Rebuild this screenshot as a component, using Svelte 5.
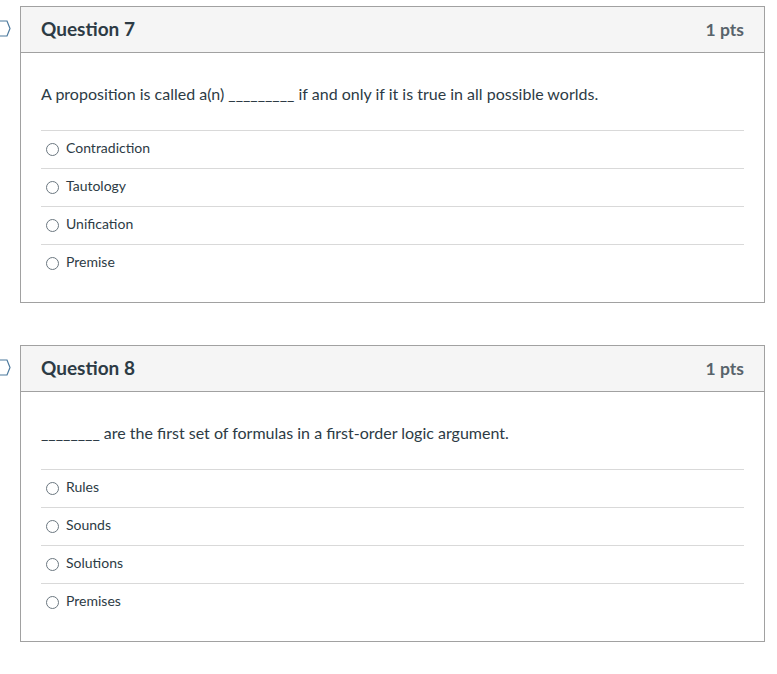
<script>
  const questions = [
    { title: 'Question 7', parts: 'A proposition is called a(n) _________ if and only if it is true in all possible worlds.', answers: ['Contradiction', 'Tautology', 'Unification', 'Premise'] },
    { title: 'Question 8', parts: '________ are the first set of formulas in a first-order logic argument.', answers: ['Rules', 'Sounds', 'Solutions', 'Premises'] }
  ];
</script>

<div class="page">
  {#each questions as q}
    <section class="card">
      <svg class="flag" width="11" height="18" viewBox="0 0 11 18" aria-hidden="true"><path d="M-3 1H7L10 8.5 7 16H-3" fill="#fff" stroke="#4d7a9e" stroke-width="1.2"/></svg>
      <header class="head">
        <h2>{q.title}</h2>
        <span class="pts">1 pts</span>
      </header>
      <div class="body">
        <p class="text">{q.parts}</p>
        <ul class="answers">
          {#each q.answers as a}
            <li><span class="radio"></span><span>{a}</span></li>
          {/each}
        </ul>
      </div>
    </section>
  {/each}
</div>

<style>
  :global(body) { margin: 0; background: #fff; }
  .page {
    font-family: Lato, "Open Sans", sans-serif;
    color: #2d3b45;
    padding: 6px 12px 32px 20px;
    display: flex;
    flex-direction: column;
    gap: 42px;
  }
  .card {
    position: relative;
    border: 1px solid #a1a1a1;
    box-sizing: border-box;
    height: 297px;
  }
  .flag { position: absolute; left: -21px; top: 13px; }
  .head {
    height: 46px;
    box-sizing: border-box;
    background: #f5f5f5;
    border-bottom: 1px solid #a1a1a1;
    display: flex;
    justify-content: space-between;
    align-items: center;
    padding: 0 20px;
  }
  h2 { margin: 0 0 2px; font-size: 19px; font-weight: 700; line-height: 43px; }
  .pts { font-size: 17.5px; font-weight: 700; color: #58636b; }
  .body { padding: 0 20px; }
  .text { margin: 0; padding-top: 31px; height: 77px; box-sizing: border-box; font-size: 16px; line-height: 20px; }
  .answers { list-style: none; margin: 0; padding: 0; }
  .answers li {
    height: 38px;
    box-sizing: border-box;
    border-top: 1px solid #d9d9d9;
    display: flex;
    align-items: center;
    gap: 7px;
    padding-left: 5px;
    padding-bottom: 5px;
    font-size: 14px;
  }
  .radio {
    width: 13px;
    height: 13px;
    border: 1px solid #6b7780;
    border-radius: 50%;
    box-sizing: border-box;
    margin-top: 5px;
  }
</style>
